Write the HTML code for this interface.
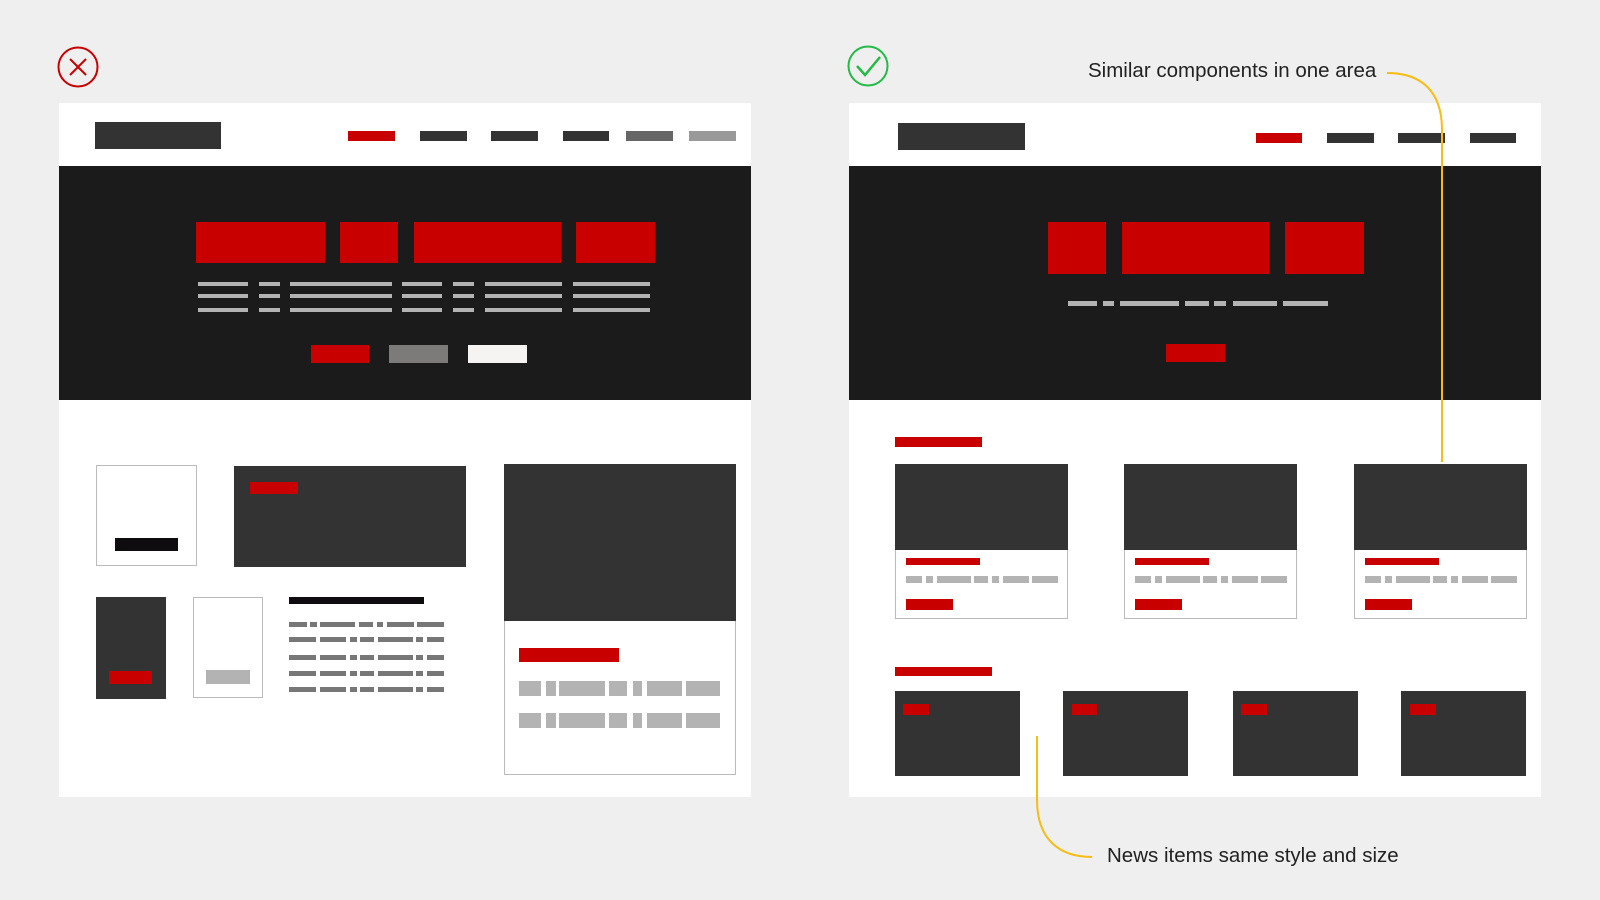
<!DOCTYPE html>
<html><head><meta charset="utf-8"><style>
html,body{margin:0;padding:0}
body{width:1600px;height:900px;background:#efefef;position:relative;overflow:hidden;font-family:"Liberation Sans",sans-serif}
div{position:absolute;box-sizing:border-box}
.R{background:#c90000}.D{background:#333}.K{background:#1b1b1b}.G{background:#b3b3b3}.M{background:#777}.W{background:#fff}
.b{border:1px solid #bbb}
.t{font-size:20.5px;color:#222;white-space:nowrap;letter-spacing:0}
</style></head><body>
<svg style="position:absolute;left:0;top:0" width="1600" height="900">
<circle cx="78" cy="67" r="19.5" fill="none" stroke="#c90000" stroke-width="2"/>
<path d="M70 59 L86 75 M86 59 L70 75" stroke="#c90000" stroke-width="2"/>
<circle cx="868" cy="66" r="19.5" fill="none" stroke="#22bb44" stroke-width="2"/>
<path d="M857 66 L865 75 L880 57" fill="none" stroke="#22bb44" stroke-width="2.5"/>
</svg>
<!-- LEFT -->
<div class="W" style="left:59px;top:103px;width:692px;height:694px"></div>
<div class="D" style="left:95px;top:122px;width:126px;height:27px"></div>
<div class="R" style="left:348px;top:131px;width:47px;height:10px"></div>
<div class="D" style="left:420px;top:131px;width:47px;height:10px"></div>
<div class="D" style="left:491px;top:131px;width:47px;height:10px"></div>
<div class="D" style="left:563px;top:131px;width:46px;height:10px"></div>
<div style="left:626px;top:131px;width:47px;height:10px;background:#666"></div>
<div style="left:689px;top:131px;width:47px;height:10px;background:#999"></div>
<div class="K" style="left:59px;top:166px;width:692px;height:234px"></div>
<div class="R" style="left:196px;top:222px;width:129px;height:41px"></div>
<div class="R" style="left:340px;top:222px;width:58px;height:41px"></div>
<div class="R" style="left:414px;top:222px;width:147px;height:41px"></div>
<div class="R" style="left:576px;top:222px;width:79px;height:41px"></div>
<svg style="position:absolute;left:0;top:0" width="760" height="400">
<g fill="#b3b3b3">
<g id="ln"><rect x="198" y="282" width="50" height="4"/><rect x="259" y="282" width="21" height="4"/><rect x="290" y="282" width="102" height="4"/><rect x="402" y="282" width="40" height="4"/><rect x="453" y="282" width="21" height="4"/><rect x="485" y="282" width="77" height="4"/><rect x="573" y="282" width="77" height="4"/></g>
<use href="#ln" y="12"/><use href="#ln" y="26"/>
</g></svg>
<div class="R" style="left:311px;top:345px;width:58px;height:18px"></div>
<div style="left:389px;top:345px;width:59px;height:18px;background:#7d7a7a"></div>
<div style="left:468px;top:345px;width:59px;height:18px;background:#f5f4f2"></div>
<div class="W b" style="left:96px;top:465px;width:101px;height:101px"></div>
<div style="left:115px;top:538px;width:63px;height:13px;background:#0e0c0e"></div>
<div class="D" style="left:234px;top:466px;width:232px;height:101px"></div>
<div class="R" style="left:250px;top:482px;width:48px;height:12px"></div>
<div class="W b" style="left:504px;top:464px;width:232px;height:311px"></div>
<div class="D" style="left:504px;top:464px;width:232px;height:157px"></div>
<div class="R" style="left:519px;top:648px;width:100px;height:14px"></div>
<svg style="position:absolute;left:0;top:0" width="760" height="800">
<g fill="#b3b3b3"><g id="gr"><rect x="519" y="681" width="22" height="15"/><rect x="546" y="681" width="10" height="15"/><rect x="559" y="681" width="46" height="15"/><rect x="609" y="681" width="18" height="15"/><rect x="633" y="681" width="9" height="15"/><rect x="647" y="681" width="35" height="15"/><rect x="686" y="681" width="34" height="15"/></g><use href="#gr" y="32"/></g>
<g fill="#777">
<rect x="289" y="622" width="18" height="5"/><rect x="310" y="622" width="7" height="5"/><rect x="320" y="622" width="35" height="5"/><rect x="359" y="622" width="14" height="5"/><rect x="377" y="622" width="6" height="5"/><rect x="387" y="622" width="27" height="5"/><rect x="417" y="622" width="27" height="5"/>
<g id="mr"><rect x="289" y="637" width="27" height="5"/><rect x="320" y="637" width="26" height="5"/><rect x="350" y="637" width="7" height="5"/><rect x="360" y="637" width="14" height="5"/><rect x="378" y="637" width="35" height="5"/><rect x="416" y="637" width="7" height="5"/><rect x="427" y="637" width="17" height="5"/></g>
<use href="#mr" y="18"/><use href="#mr" y="34"/><use href="#mr" y="50"/>
</g></svg>
<div class="D" style="left:96px;top:597px;width:70px;height:102px"></div>
<div class="R" style="left:109px;top:671px;width:43px;height:13px"></div>
<div class="W b" style="left:193px;top:597px;width:70px;height:101px"></div>
<div class="G" style="left:206px;top:670px;width:44px;height:14px"></div>
<div style="left:289px;top:597px;width:135px;height:7px;background:#0e0c0e"></div>
<!-- RIGHT -->
<div class="W" style="left:849px;top:103px;width:692px;height:694px"></div>
<div class="D" style="left:898px;top:123px;width:127px;height:27px"></div>
<div class="R" style="left:1256px;top:133px;width:46px;height:10px"></div>
<div class="D" style="left:1327px;top:133px;width:47px;height:10px"></div>
<div class="D" style="left:1398px;top:133px;width:47px;height:10px"></div>
<div class="D" style="left:1470px;top:133px;width:46px;height:10px"></div>
<div class="K" style="left:849px;top:166px;width:692px;height:234px"></div>
<div class="R" style="left:1048px;top:222px;width:58px;height:52px"></div>
<div class="R" style="left:1122px;top:222px;width:147px;height:52px"></div>
<div class="R" style="left:1285px;top:222px;width:79px;height:52px"></div>
<svg style="position:absolute;left:0;top:0" width="1600" height="900">
<g fill="#b3b3b3"><rect x="1068" y="301" width="29" height="5"/><rect x="1103" y="301" width="11" height="5"/><rect x="1120" y="301" width="59" height="5"/><rect x="1185" y="301" width="24" height="5"/><rect x="1214" y="301" width="12" height="5"/><rect x="1233" y="301" width="44" height="5"/><rect x="1283" y="301" width="45" height="5"/></g>
</svg>
<div class="R" style="left:1166px;top:344px;width:59px;height:18px"></div>
<div class="R" style="left:895px;top:437px;width:87px;height:10px"></div>
<div class="W b" style="left:895px;top:464px;width:173px;height:155px"></div><div class="D" style="left:895px;top:464px;width:173px;height:86px"></div>
<div class="R" style="left:906px;top:558px;width:74px;height:7px"></div><div class="R" style="left:906px;top:599px;width:47px;height:11px"></div>
<div class="W b" style="left:1124px;top:464px;width:173px;height:155px"></div><div class="D" style="left:1124px;top:464px;width:173px;height:86px"></div>
<div class="R" style="left:1135px;top:558px;width:74px;height:7px"></div><div class="R" style="left:1135px;top:599px;width:47px;height:11px"></div>
<div class="W b" style="left:1354px;top:464px;width:173px;height:155px"></div><div class="D" style="left:1354px;top:464px;width:173px;height:86px"></div>
<div class="R" style="left:1365px;top:558px;width:74px;height:7px"></div><div class="R" style="left:1365px;top:599px;width:47px;height:11px"></div>
<svg style="position:absolute;left:0;top:0" width="1600" height="900">
<g fill="#b3b3b3"><g id="cg"><rect x="906" y="576" width="16" height="7"/><rect x="926" y="576" width="7" height="7"/><rect x="937" y="576" width="34" height="7"/><rect x="974" y="576" width="14" height="7"/><rect x="992" y="576" width="7" height="7"/><rect x="1003" y="576" width="26" height="7"/><rect x="1032" y="576" width="26" height="7"/></g>
<use href="#cg" x="229"/><use href="#cg" x="459"/></g>
</svg>
<div class="R" style="left:895px;top:667px;width:97px;height:9px"></div>
<div class="D" style="left:895px;top:691px;width:125px;height:85px"></div><div class="R" style="left:903px;top:704px;width:26px;height:11px"></div>
<div class="D" style="left:1063px;top:691px;width:125px;height:85px"></div><div class="R" style="left:1072px;top:704px;width:25px;height:11px"></div>
<div class="D" style="left:1233px;top:691px;width:125px;height:85px"></div><div class="R" style="left:1241px;top:704px;width:26px;height:11px"></div>
<div class="D" style="left:1401px;top:691px;width:125px;height:85px"></div><div class="R" style="left:1410px;top:704px;width:26px;height:11px"></div>
<svg style="position:absolute;left:0;top:0" width="1600" height="900">
<path d="M1387 73 C1420 73 1442 90 1442 130 L1442 462" fill="none" stroke="#f7bd14" stroke-width="2"/>
<path d="M1037 736 L1037 800 C1037 840 1060 857 1092 857" fill="none" stroke="#f7bd14" stroke-width="2"/>
</svg>
<div class="t" style="left:1088px;top:59px">Similar components in one area</div>
<div class="t" style="left:1107px;top:844px">News items same style and size</div>
</body></html>
